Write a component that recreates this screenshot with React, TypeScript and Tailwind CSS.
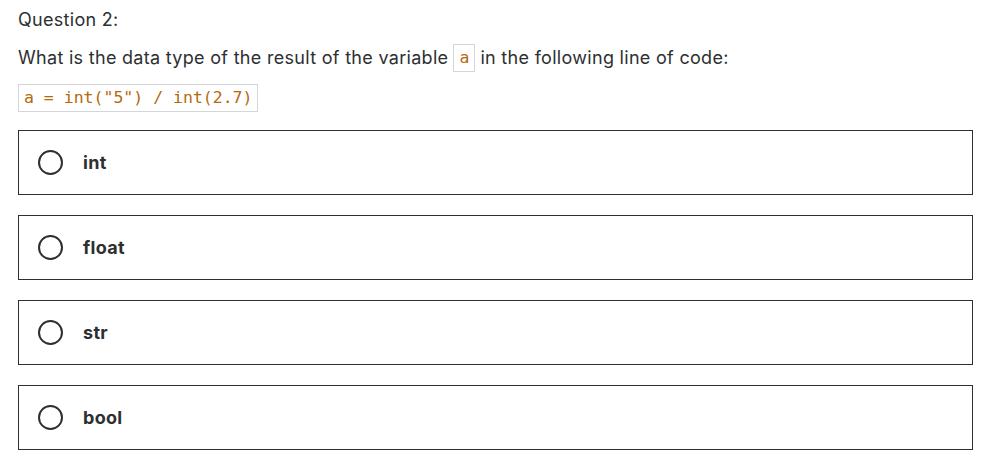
import React from "react";

const options = ["int", "float", "str", "bool"];

export default function App() {
  return (
    <div className="w-[992px] h-[471px] bg-white text-[#2d2f31] px-[18px] pt-[8px] tracking-[0.3px]" style={{ fontFamily: "Inter, 'Noto Sans', sans-serif" }}>
      <div className="text-[18px] leading-[24px]">Question 2:</div>
      <div className="mt-[12px] text-[18px] leading-[28px] flex items-center">
        <span>What is the data type of the result of the variable</span>
        <code className="mx-[5px] w-[22px] h-[28px] flex items-center justify-center border border-[#d1d7dc] text-[#b4690e] text-[16.5px] tracking-normal font-['DejaVu_Sans_Mono',monospace]">a</code>
        <span>in the following line of code:</span>
      </div>
      <div className="mt-[12px] inline-block border border-[#d1d7dc] px-[5px] py-[2px] text-[#b4690e] text-[16.5px] leading-[22px] tracking-normal font-['DejaVu_Sans_Mono',monospace] whitespace-pre">
        a = int("5") / int(2.7)
      </div>
      <div className="mt-[18px] flex flex-col gap-[20px] w-[955px]">
        {options.map((o) => (
          <div key={o} className="h-[65px] border border-[#2d2f31] flex items-center pl-[19px]">
            <span className="w-[25px] h-[25px] rounded-full border-2 border-[#2d2f31]" />
            <span className="ml-[20px] font-bold text-[18px]">{o}</span>
          </div>
        ))}
      </div>
    </div>
  );
}
